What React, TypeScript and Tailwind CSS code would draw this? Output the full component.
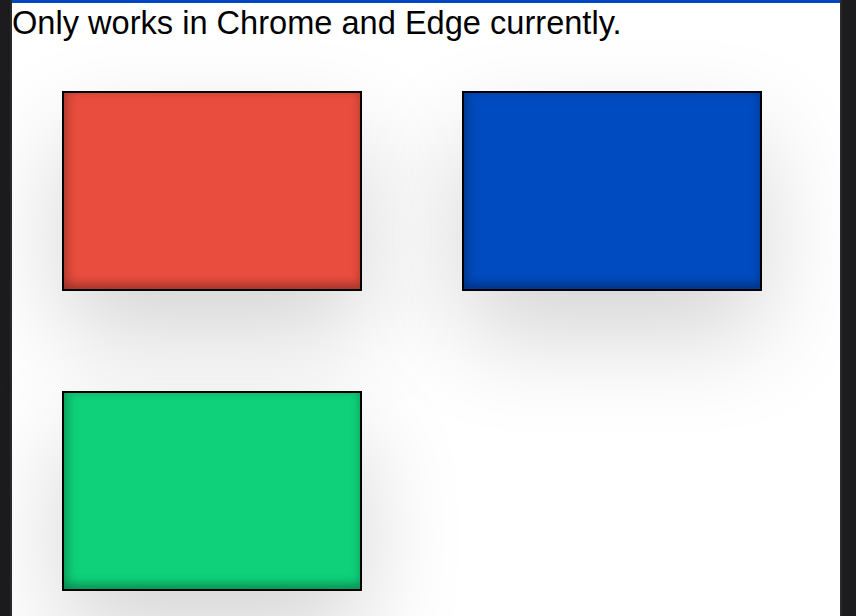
export default function App() {
  const box =
    "w-[300px] h-[200px] border-2 border-black shadow-[0_45px_100px_rgba(0,0,0,0.17),inset_0_-6px_10px_rgba(0,0,0,0.25),inset_6px_0_10px_rgba(0,0,0,0.12)]";
  return (
    <div className="flex w-[856px] h-[616px] overflow-hidden bg-[#1c1c1e]">
      <div className="w-[10px] h-full bg-[#1c1c1e]" />
      <div className="w-[2px] h-full bg-[#2a2a2c]" />
      <div className="w-[828px] h-full bg-white border-t-[3px] border-[#0047c4] flex flex-col">
        <div
          className="text-[32.6px] leading-[36px] text-black pt-[2px] h-[37px]"
          style={{ fontFamily: '"Liberation Sans", Arial, sans-serif' }}
        >
          Only works in Chrome and Edge currently.
        </div>
        <div className="flex flex-wrap gap-x-[100px] gap-y-[100px] pl-[50px] pt-[51px] w-[800px]">
          <div className={`${box} bg-[#e94d3e]`} />
          <div className={`${box} bg-[#004bbf]`} />
          <div className={`${box} bg-[#0fd17a]`} />
        </div>
      </div>
      <div className="w-[2px] h-full bg-[#2a2a2c]" />
      <div className="flex-1 h-full bg-[#1c1c1e]" />
    </div>
  );
}
